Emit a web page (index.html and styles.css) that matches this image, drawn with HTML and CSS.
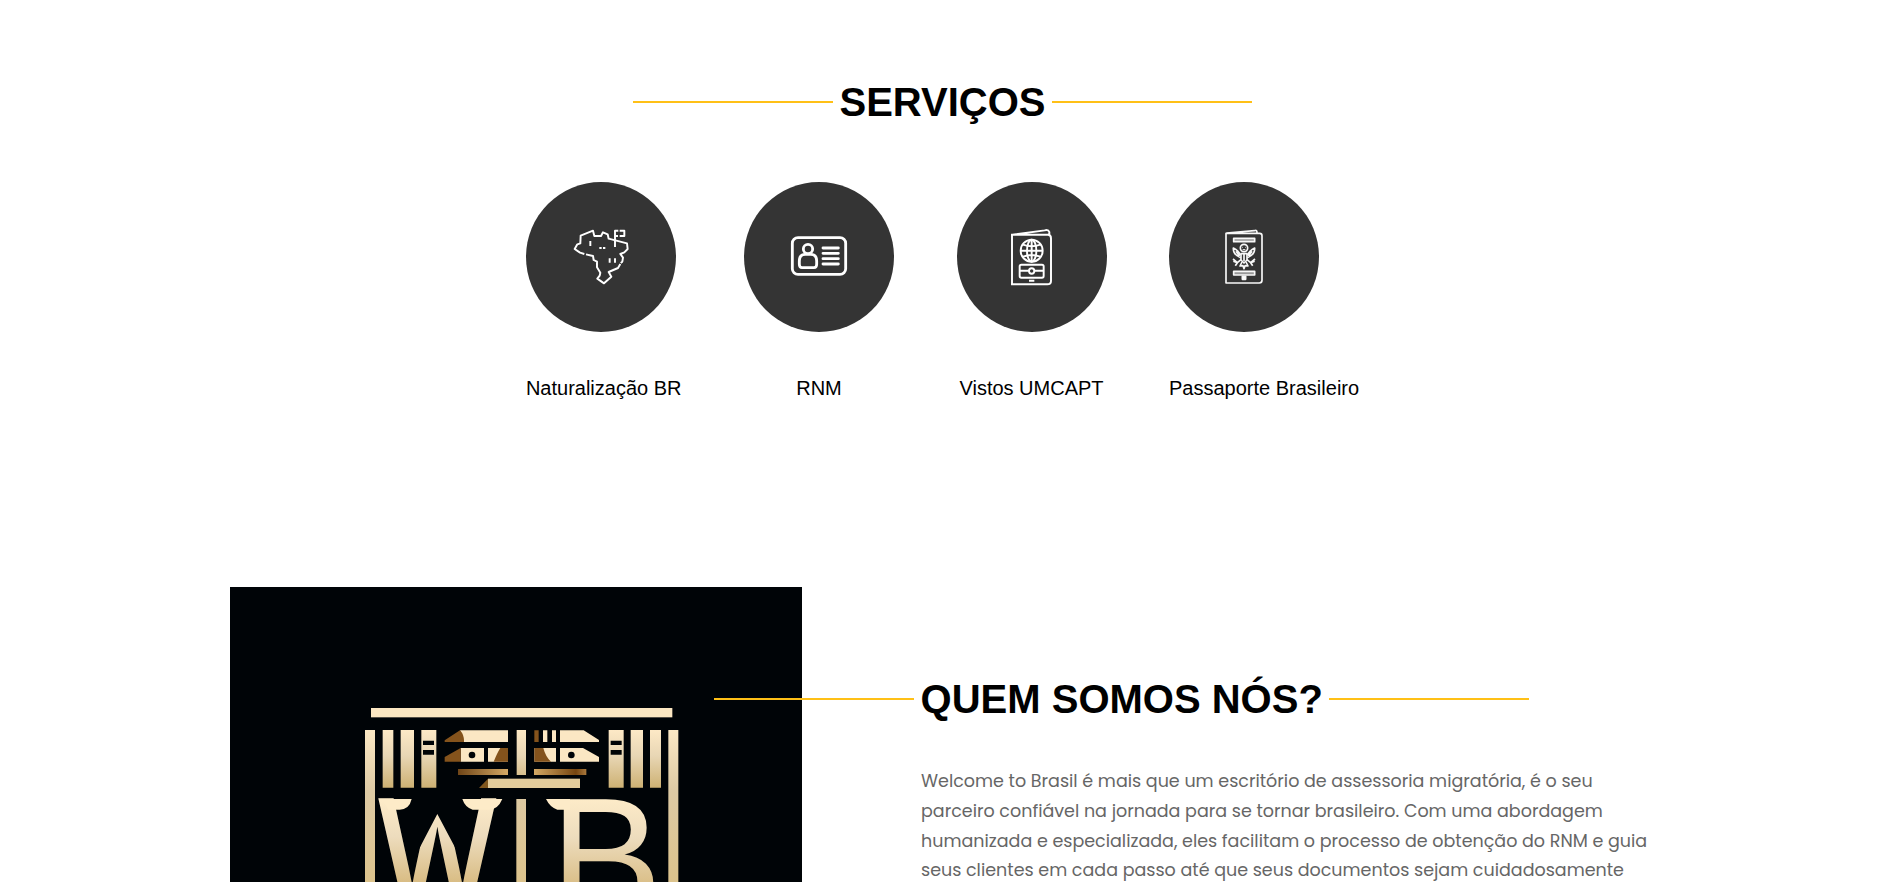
FILE: index.html
```html
<!DOCTYPE html>
<html lang="pt-BR">
<head>
<meta charset="utf-8">
<title>Welcome to Brasil</title>
<link rel="stylesheet" href="styles.css">
</head>
<body>
<section class="services">
  <h2 class="title">SERVIÇOS</h2>
  <div class="service-list">
    <div class="service">
      <div class="disc">
        <svg class="icon" viewBox="48 36 450 450">
          <g fill="none" stroke="#fff" stroke-width="5.8" stroke-linejoin="round">
            <path d="M223 252L210 248L194 237L202 223L211 220L212 197L249 182L253 198H273L279 187L293 193L296 206L351 220L353 237L343 247L331 252L339 263L337 275L332 279"/>
            <path d="M228 253L249 258L251 270L261 275V292L271 308L269 317L262 326L282 340L304 320L296 306L324 294L331 282"/>
            <path d="M315 231V182H325M329 182H343V198H329M315 198H324M241 213V228M299 265V278M315 265V278M268 234H275M279 234H286"/>
          </g>
        </svg>
      </div>
      <p class="label">Naturalização BR</p>
    </div>
    <div class="service">
      <div class="disc">
        <svg class="icon" viewBox="42 36 450 450">
          <g fill="none" stroke="#fff" stroke-width="8.5">
            <rect x="187" y="203" width="160" height="110" rx="17"/>
            <circle cx="234" cy="237" r="14"/>
            <path d="M216 293H252Q260 293 260 283V273Q260 253 242 253H226Q208 253 208 273V283Q208 293 216 293Z"/>
            <path d="M279 234H325M279 250H325M279 266H325M279 282H325" stroke-linecap="round"/>
          </g>
        </svg>
      </div>
      <p class="label">RNM</p>
    </div>
    <div class="service">
      <div class="disc">
        <svg class="icon" viewBox="51 36 450 450">
          <g fill="none" stroke="#fff" stroke-width="5.8">
            <path d="M216 194H324Q333 194 333 205V333Q333 343 322 343H216ZM217 194L314 181Q325 178 328 186V195"/>
            <circle cx="275" cy="242" r="33"/>
            <ellipse cx="275" cy="242" rx="14" ry="33"/>
            <path d="M275 209V275M242 242H308M249 224Q275 234 301 224M249 260Q275 250 301 260"/>
            <rect x="239" y="284" width="72" height="39" rx="5"/>
            <circle cx="275" cy="303" r="8"/>
            <path d="M239 302H267M283 302H311M267 332H283"/>
          </g>
        </svg>
      </div>
      <p class="label">Vistos UMCAPT</p>
    </div>
    <div class="service">
      <div class="disc">
        <svg class="icon" viewBox="57 36 450 450">
          <g fill="none" stroke="#f8f8f8" stroke-width="5" stroke-linejoin="round">
            <path d="M228 190H329Q336 190 336 197V331Q336 339 328 339H228ZM229 189L314 182Q321 179 321 188"/>
            <rect x="251" y="205" width="63" height="10" fill="#999"/>
            <rect x="251" y="304" width="63" height="11" fill="#999"/>
            <rect x="277" y="319" width="10" height="9" fill="#fff"/>
            <circle cx="282" cy="234" r="11"/>
            <path d="M277 232H279M285 232H287M278 239H286" stroke-width="3"/>
            <path d="M273 251H291V270L282 279L273 270ZM282 251V273"/>
            <path d="M272 263Q249 254 250 234Q266 242 271 255M292 263Q315 254 314 234Q298 242 293 255M258 244L269 259M306 244L295 259"/>
            <path d="M273 269L262 278L249 267M262 278L250 274M262 278L256 287M291 269L302 278L315 267M302 278L314 274M302 278L308 287M276 276L270 288L279 287L282 296L285 287L294 288L288 276"/>
          </g>
        </svg>
      </div>
      <p class="label">Passaporte Brasileiro</p>
    </div>
  </div>
</section>

<section class="about">
  <svg class="brand" viewBox="-360 -309 1716 885">
    <defs>
      <linearGradient id="pillar" gradientUnits="userSpaceOnUse" x1="0" y1="120" x2="0" y2="294">
        <stop offset="0" stop-color="#fde9c6"/><stop offset=".45" stop-color="#e8d6b4"/><stop offset="1" stop-color="#cdb173"/>
      </linearGradient>
      <linearGradient id="letter" gradientUnits="userSpaceOnUse" x1="0" y1="-328" x2="0" y2="-55">
        <stop offset="0" stop-color="#fdebc8"/><stop offset=".4" stop-color="#eddcbd"/><stop offset="1" stop-color="#d5b77a"/>
      </linearGradient>
      <linearGradient id="frame" gradientUnits="userSpaceOnUse" x1="0" y1="120" x2="0" y2="576">
        <stop offset="0" stop-color="#fbe8c4"/><stop offset=".4" stop-color="#ddcaa4"/><stop offset="1" stop-color="#dcc38c"/>
      </linearGradient>
      <linearGradient id="bronze"><stop offset="0" stop-color="#6f4517"/><stop offset="1" stop-color="#d4a965"/></linearGradient>
      <linearGradient id="bronze2"><stop offset="0" stop-color="#d4a965"/><stop offset=".8" stop-color="#754510"/><stop offset="1" stop-color="#a9793d"/></linearGradient>
    </defs>
    <rect x="-360" y="-309" width="1716" height="885" fill="#000407"/>
    <rect x="63" y="54" width="904" height="28" fill="#fbe7c2"/>
    <path fill="url(#frame)" d="M45 120H75V576H45ZM955 120H985V576H955ZM499 327H528V576H499Z"/>
    <path fill="url(#pillar)" d="M98 120H130V293H98ZM152 120H192V293H152ZM214 120H259V293H214ZM776 120H821V293H776ZM842 120H879V293H842ZM900 120H933V293H900ZM500 120H528V255H500Z"/>
    <path fill="#000407" d="M219 152H252V165H219ZM219 180H252V194H219ZM782 152H815V165H782ZM782 180H815V194H782Z"/>
    <path fill="#fbe7c3" d="M330 121H474V156H342ZM579 121H592V156H579ZM606 121H618V156H606ZM630 121H701L747 150V156H630ZM332 174H402V215H332ZM414 174H474V215H414ZM553 174H618V215H553ZM630 174H699L747 201V215H630Z"/>
    <path fill="#84531c" d="M284 151L330 121Q343 135 342 156H284ZM553 121H566V156H553ZM284 201L332 174V215H284ZM474 174V215H431Q442 188 451 174ZM553 174H580Q587 201 603 215H553Z"/>
    <circle cx="366" cy="195" r="10" fill="#000407"/><circle cx="664" cy="195" r="10" fill="#000407"/>
    <rect x="324" y="237" width="150" height="18" fill="url(#bronze)"/>
    <rect x="552" y="237" width="157" height="18" fill="url(#bronze2)"/>
    <rect x="414" y="266" width="276" height="28" fill="#e3cc9b"/>
    <path fill="#80571e" d="M414 266V294H387Z"/>
    <g class="initials" fill="url(#letter)">
      <text class="heavy" transform="translate(90 655) scale(.765 .985)">W</text>
      <text transform="translate(600 677) scale(1.06 1.067)">B</text>
    </g>
    <path fill="#000407" d="M195 312H330V500L262 372L195 500Z"/>
    <path fill="#fdebc8" d="M89 327H185Q178 358 149 359H115Q104 337 89 327ZM337 327H457Q444 358 418 359H368Q345 352 337 327ZM588 327H660V359H622Q600 352 588 327Z"/>
  </svg>
  <div class="about-text">
    <h2 class="title">QUEM SOMOS NÓS?</h2>
    <p class="copy">
      <span class="line">Welcome to Brasil é mais que um escritório de assessoria migratória, é o seu</span>
      <span class="line">parceiro confiável na jornada para se tornar brasileiro. Com uma abordagem</span>
      <span class="line">humanizada e especializada, eles facilitam o processo de obtenção do RNM e guia</span>
      <span class="line">seus clientes em cada passo até que seus documentos sejam cuidadosamente</span>
    </p>
  </div>
</section>
</body>
</html>
```
FILE: styles.css
```css
* { box-sizing: border-box; }
body {
  margin: 0;
  height: 882px;
  overflow: hidden;
  background: #fff;
  color: #000;
  font-family: Arial, "Liberation Sans", sans-serif;
}
.services {
  height: 587px;
  padding-top: 79px;
  display: flex;
  flex-direction: column;
  align-items: center;
}
.title {
  margin: 0;
  display: flex;
  align-items: center;
  gap: 6.6px;
  font-size: 40px;
  line-height: 46px;
  white-space: nowrap;
}
.title::before, .title::after {
  content: "";
  flex: none;
  width: 200px;
  height: 2px;
  background: #ffc017;
}
.service-list {
  display: flex;
  gap: 62.5px;
  margin-top: 57px;
}
.disc {
  width: 150px;
  height: 150px;
  border-radius: 50%;
  background: #343434;
}
.icon { display: block; width: 150px; height: 150px; }
.label {
  margin: 45px 0 0;
  font-size: 20px;
  line-height: 23px;
  text-align: center;
  white-space: nowrap;
}
.about {
  display: flex;
  height: 295px;
  padding-left: 230px;
}
.brand { display: block; flex: none; width: 572px; height: 295px; }
.initials {
  font-family: "Liberation Sans", Arial, sans-serif;
  font-size: 476px;
}
.heavy {
  stroke: url(#letter);
  stroke-width: 13px;
}
.about-text { padding-top: 89px; }
.about-text .title { margin-left: -88px; }
.copy {
  margin: 45px 0 0 119px;
  color: #666;
  font-family: Poppins, Inter, sans-serif;
  font-size: 17.5px;
  line-height: 29.75px;
}
.line { display: block; white-space: nowrap; }
```
